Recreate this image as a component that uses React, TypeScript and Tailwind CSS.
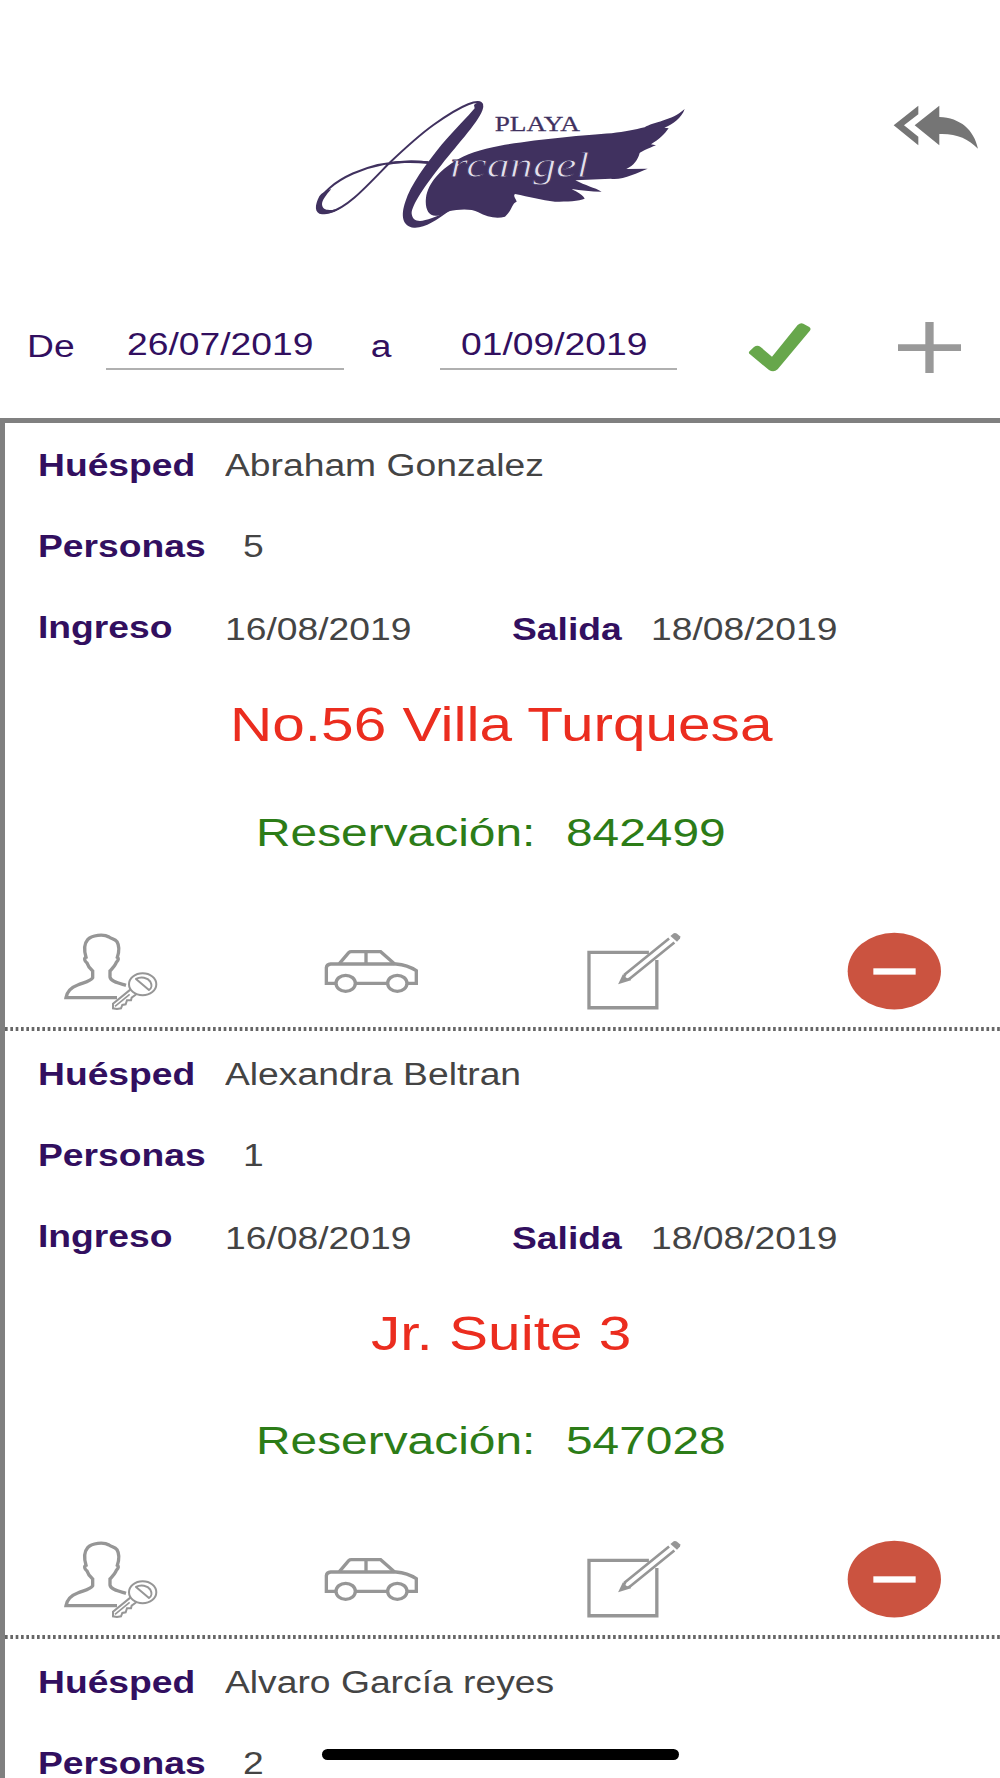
import type { ReactNode } from 'react'
import clsx from 'clsx'

interface Reservation {
  guest: string
  people: number
  checkIn: string
  checkOut: string
  room: string
  code: string
}

const RESERVATIONS: Reservation[] = [
  {
    guest: 'Abraham Gonzalez',
    people: 5,
    checkIn: '16/08/2019',
    checkOut: '18/08/2019',
    room: 'No.56 Villa Turquesa',
    code: '842499',
  },
  {
    guest: 'Alexandra Beltran',
    people: 1,
    checkIn: '16/08/2019',
    checkOut: '18/08/2019',
    room: 'Jr. Suite 3',
    code: '547028',
  },
  {
    guest: 'Alvaro García reyes',
    people: 2,
    checkIn: '',
    checkOut: '',
    room: '',
    code: '',
  },
]

// Wide text, stretched from its left edge
function Wide({ children, className }: { children: ReactNode; className?: string }) {
  return (
    <span className={clsx('inline-block origin-left scale-x-[1.215] whitespace-pre', className)}>
      {children}
    </span>
  )
}

function Logo() {
  return (
    <svg viewBox="0 0 1200 480" className="h-[160px] w-[400px]" fill="#40315f">
      {/* Wing */}
      <path d="M412 392C386 396 374 372 378 338C384 292 424 254 462 230C498 207 540 193 600 182C700 165 850 150 935 145C975 140 1005 134 1034 127C1060 110 1115 108 1154 72C1145 98 1120 117 1093 128L1106 130C1094 147 1078 163 1053 178L1068 181C1046 190 1026 199 1019 204C1013 226 1002 241 979 252L1043 251C1010 264 968 286 932 281L826 286C856 302 884 308 905 320C872 320 842 316 815 312C832 321 851 331 854 341C838 348 800 350 765 350C724 346 688 335 645 327C638 334 648 340 650 350C634 356 636 378 615 395C590 402 560 396 535 382C512 369 470 374 450 378C436 384 424 392 412 392Z" />
      {/* Flourish */}
      <path d="M522 60C538 46 554 54 549 70C542 104 476 174 424 240C376 300 334 362 335 386C340 420 376 412 450 376C410 406 374 430 342 428C306 424 302 390 316 350C332 300 376 240 424 180C464 134 506 92 524 70Z" />
      <path
        d="M547 60C540 38 490 56 400 120C350 156 306 198 265 237C196 308 140 370 90 381C60 386 48 374 56 350C76 300 200 214 385 232"
        fill="none"
        stroke="#40315f"
        strokeWidth="6"
      />
      <path d="M58 334C44 360 42 386 66 388C86 388 104 382 124 368C98 376 68 382 66 358C66 346 78 330 94 312C76 318 64 324 58 334Z" />
      <path d="M262 234C310 224 350 226 392 230L384 237C345 234 310 232 262 240Z" />
      <text x="584" y="137" fontSize="64" textLength="256" lengthAdjust="spacingAndGlyphs" fontFamily="Liberation Serif, serif" stroke="#40315f" strokeWidth="0.8">
        PLAYA
      </text>
      <text
        x="450"
        y="275"
        fontSize="108"
        textLength="418"
        lengthAdjust="spacingAndGlyphs"
        fontFamily="Liberation Serif, serif"
        fontStyle="italic"
        fill="#e4e0ec"
        stroke="#40315f"
        strokeWidth="2.5"
      >
        rcangel
      </text>
    </svg>
  )
}

function ReplyAllIcon() {
  return (
    <svg viewBox="100 75 256 132" className="h-[44px] w-[85.3px]" fill="#757575">
      <path d="M176 77L102 136L176 196V170L133 136L176 103Z" />
      <path d="M239 77L165 136L239 196V162C290 160 326 176 355 206C343 150 302 113 239 111Z" />
    </svg>
  )
}

function CheckIcon() {
  return (
    <svg viewBox="745 65 190 152" className="h-[50.7px] w-[63.3px]" fill="#67a74b">
      <path d="M751 151L763 140Q773 133 783 140L817 169L894 74Q903 66 911 70L929 80Q936 85 930 92L834 207Q822 218 808 209L751 162Q744 157 751 151Z" />
    </svg>
  )
}

function PlusIcon() {
  return (
    <svg viewBox="1193 64 190 154" className="h-[51.3px] w-[63.3px]" fill="#999999">
      <path d="M1275 64H1300V131H1383V151H1300V218H1275V151H1193V131H1275Z" />
    </svg>
  )
}

const ICON = 'h-[78.3px] w-[95px] shrink-0'

function GuestKeyIcon() {
  return (
    <svg viewBox="70 65 285 235" className={ICON} fill="none" stroke="#969696">
      <path
        d="M259 225C240 219 213 214 211 200V182C220 172 226 166 230 156C238 148 237 144 233 141C238 126 240 108 232 94C226 86 216 86 208 80C192 70 156 74 144 88C132 102 134 124 139 141C132 144 135 152 142 158C145 168 152 176 159 182V202C154 212 134 216 114 224C92 232 82 244 79 262H232"
        strokeWidth="10"
      />
      <ellipse cx="309" cy="222" rx="41" ry="33" strokeWidth="6" />
      <path d="M289 206C304 198 324 202 332 214C338 224 336 234 328 239Z" strokeWidth="6" strokeLinejoin="round" />
      <path d="M272 238L220 280V294L232 296L244 294L248 284L258 282L262 270L274 270L276 262L290 252" strokeWidth="6" />
      <path d="M270 252L226 288" strokeWidth="5" />
    </svg>
  )
}

function CarIcon() {
  return (
    <svg viewBox="854 65 285 235" className={ICON} fill="none" stroke="#969696" strokeWidth="10">
      <path d="M888 219H861V172Q862 162 874 161H1070C1094 163 1114 170 1131 181V219H1106M950 219H1043" />
      <path d="M900 160L928 127Q931 124 936 124H1024L1066 161M980 124V161" />
      <ellipse cx="919" cy="219" rx="29" ry="24" />
      <ellipse cx="1074" cy="219" rx="29" ry="24" />
    </svg>
  )
}

function EditIcon() {
  return (
    <svg viewBox="76 65 287 235" className={ICON} fill="none" stroke="#969696" strokeWidth="10">
      <path d="M266 126H85V293H290V149" />
      <path d="M327 84L191 194M343 96L207 206" strokeWidth="8" />
      <path d="M187 193L173 222L212 210L208 202L200 204L195 200L198 194Z" fill="#969696" stroke="none" />
      <path d="M331 76L341 68Q346 66 350 69L360 77Q362 80 360 84L351 94Z" fill="#969696" stroke="none" />
    </svg>
  )
}

function RemoveIcon() {
  return (
    <svg viewBox="862 65 285 235" className={ICON}>
      <ellipse cx="1004" cy="182.500" rx="140" ry="115" fill="#cb5340" />
      <rect x="941" y="174" width="127" height="19" fill="#ffffff" />
    </svg>
  )
}

function DateField({ value }: { value: string }) {
  return (
    <div className="h-[41px] w-[237.5px] border-b-2 border-[#b0b0b0] pl-[21px]">
      <Wide>{value}</Wide>
    </div>
  )
}

function ReservationCard({ item }: { item: Reservation }) {
  return (
    <div className="h-[608.6px] shrink-0">
      <div className="flex h-[603.6px] flex-col pt-[27px] pl-[33px] text-[30.66px] leading-none text-[#444444]">
        <div className="flex h-[81px] shrink-0">
          <Wide className="w-[186.5px] shrink-0 font-bold text-[#320f5f]">Huésped</Wide>
          <Wide>{item.guest}</Wide>
        </div>
        <div className="flex h-[81px] shrink-0">
          <Wide className="w-[205px] shrink-0 font-bold text-[#320f5f]">Personas</Wide>
          <Wide>{item.people}</Wide>
        </div>
        {item.room && (
          <>
            <div className="flex h-[88px] shrink-0">
              <Wide className="w-[187px] shrink-0 font-bold text-[#320f5f]">Ingreso</Wide>
              <Wide className="w-[287px] shrink-0 pt-[2px]">{item.checkIn}</Wide>
              <Wide className="w-[139px] shrink-0 pt-[2px] font-bold text-[#320f5f]">Salida</Wide>
              <Wide className="pt-[2px]">{item.checkOut}</Wide>
            </div>
            <div className="mr-[36px] h-[112.5px] shrink-0 text-center text-[48.2px] leading-none text-[#eb2d1f]">
              <span className="inline-block scale-x-[1.215]">{item.room}</span>
            </div>
            <div className="flex h-[119px] shrink-0 pl-[218px] text-[39.4px] leading-none text-[#2c7c17]">
              <Wide className="w-[310px] shrink-0">Reservación:</Wide>
              <Wide>{item.code}</Wide>
            </div>
            <div className="flex gap-[166.5px] pl-[24.7px]">
              <GuestKeyIcon />
              <CarIcon />
              <EditIcon />
              <RemoveIcon />
            </div>
          </>
        )}
      </div>
      <svg className="block h-[5px] w-full">
        <line x1="0" y1="2" x2="995" y2="2" stroke="#666666" strokeWidth="4" strokeDasharray="2.667 2.667" />
      </svg>
    </div>
  )
}

export default function App() {
  return (
    <div className="relative flex h-[1778px] w-[1000px] flex-col overflow-hidden bg-white font-['Liberation_Sans',Arial,sans-serif]">
      <header className="flex h-[321px] shrink-0 pt-[85px] pl-[300px]">
        <Logo />
        <div className="pt-[20px] pl-[193.3px]">
          <ReplyAllIcon />
        </div>
      </header>

      {/* Date range filter */}
      <div className="flex h-[97px] shrink-0 pl-[27px] text-[30.66px] leading-none text-[#320f5f]">
        <Wide className="w-[79px] shrink-0 pt-[10px]">De</Wide>
        <div className="pt-[8px]">
          <DateField value="26/07/2019" />
        </div>
        <Wide className="w-[96px] shrink-0 pt-[10px] pl-[22px]">a</Wide>
        <div className="pt-[8px]">
          <DateField value="01/09/2019" />
        </div>
        <div className="flex gap-[87px] pt-[0.5px] pl-[70.5px]">
          <CheckIcon />
          <PlusIcon />
        </div>
      </div>

      <main className="flex min-h-0 flex-1 flex-col overflow-hidden border-t-5 border-l-5 border-[#808080]">
        {RESERVATIONS.map((item) => (
          <ReservationCard key={item.guest} item={item} />
        ))}
      </main>

      {/* Home indicator */}
      <div className="absolute bottom-[18px] left-[321.5px] h-[11px] w-[357.5px] rounded-full bg-black" />
    </div>
  )
}
